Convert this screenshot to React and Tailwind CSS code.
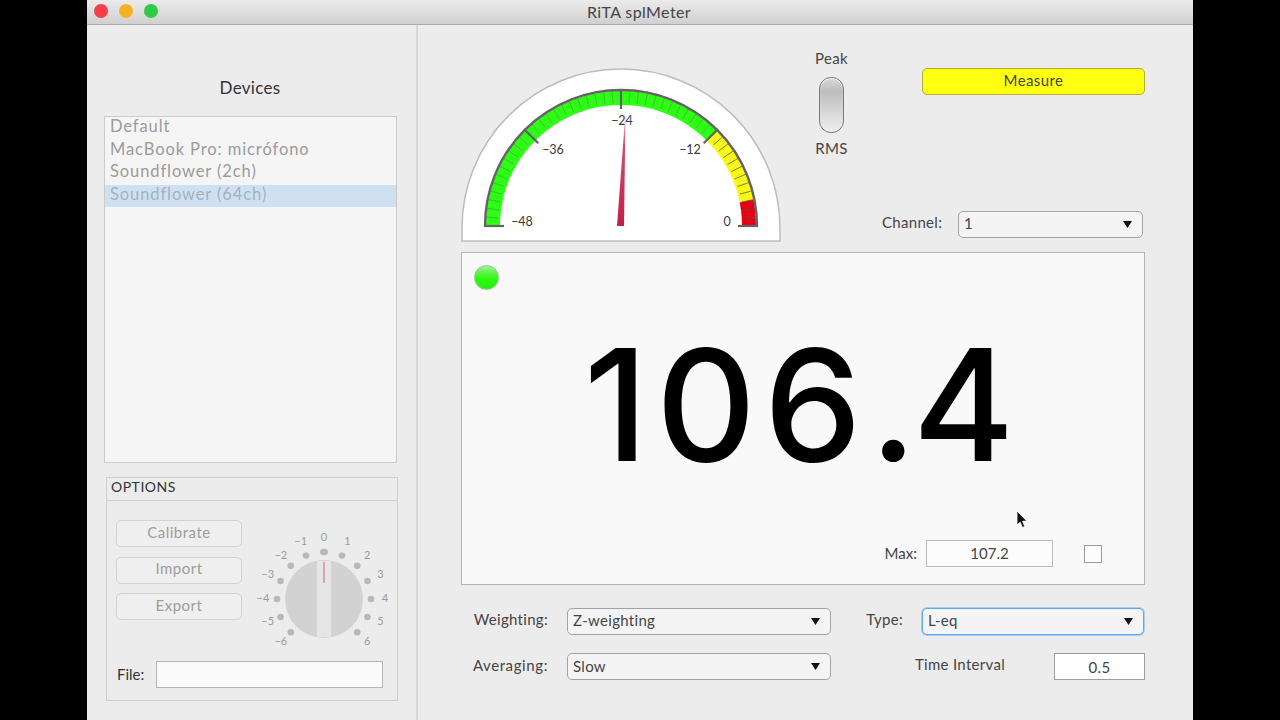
import React from "react";

const ui = "font-['Lato',sans-serif]";

function polar(cx, cy, r, deg) {
  const a = (deg * Math.PI) / 180;
  return [cx - r * Math.cos(a), cy - r * Math.sin(a)];
}

function sector(cx, cy, r1, r2, a1, a2) {
  const [x1, y1] = polar(cx, cy, r2, a1);
  const [x2, y2] = polar(cx, cy, r2, a2);
  const [x3, y3] = polar(cx, cy, r1, a2);
  const [x4, y4] = polar(cx, cy, r1, a1);
  return `M${x1} ${y1} A${r2} ${r2} 0 0 1 ${x2} ${y2} L${x3} ${y3} A${r1} ${r1} 0 0 0 ${x4} ${y4} Z`;
}

function Gauge() {
  const cx = 160;
  const cy = 158;
  const segs = Array.from({ length: 48 }, (_, i) => i);
  const labels = [
    ["-48", 61, 155],
    ["-36", 92, 83],
    ["-24", 161, 54],
    ["-12", 229, 83],
    ["0", 266, 155],
  ];
  return (
    <svg width="320" height="174" viewBox="0 0 320 174" className="block shrink-0">
      <path d="M1 173 L1 160 A159 159 0 0 1 319 160 L319 173 Z" fill="#fff" stroke="#bdbdbd" strokeWidth="1.5" />
      {segs.map((i) => {
        const a1 = i * 3.75;
        const a2 = a1 + 3.75;
        const color = i < 36 ? "#2bff12" : i < 45 ? "#f7f71a" : "#e60012";
        return <path key={i} d={sector(cx, cy, 121, 135, a1, a2)} fill={color} />;
      })}
      {segs.slice(1).map((i) => {
        const [x1, y1] = polar(cx, cy, 123, i * 3.75);
        const [x2, y2] = polar(cx, cy, 135, i * 3.75);
        return <line key={i} x1={x1} y1={y1} x2={x2} y2={y2} stroke="#3c3c3c" strokeOpacity={i < 36 ? 0.5 : 0.8} strokeWidth="0.8" />;
      })}
      <path d={`M${cx - 136} ${cy} A136 136 0 0 1 ${cx + 136} ${cy}`} fill="none" stroke="#636363" strokeWidth="2.4" />
      {[0, 45, 90, 135, 180].map((d) => {
        const [x1, y1] = polar(cx, cy, 117, d);
        const [x2, y2] = polar(cx, cy, 137, d);
        return <line key={d} x1={x1} y1={y1} x2={x2} y2={y2} stroke="#636363" strokeWidth="2.2" />;
      })}
      {labels.map(([t, x, y]) => (
        <text key={t} x={x} y={y} textAnchor="middle" dominantBaseline="middle" fontSize="12.5" fill="#3a3a3a" fontFamily="Lato, sans-serif">
          {t.replace("-", "\u2212")}
        </text>
      ))}
      <defs>
        <linearGradient id="needle" x1="0" y1="0" x2="0" y2="1">
          <stop offset="0" stopColor="#f2b8c6" />
          <stop offset="0.3" stopColor="#d24a6c" />
          <stop offset="1" stopColor="#bd2146" />
        </linearGradient>
      </defs>
      <polygon points="164.500,44 163,158 156,158" fill="url(#needle)" />
    </svg>
  );
}

function Knob() {
  const cx = 70;
  const cy = 69;
  const marks = [-6, -5, -4, -3, -2, -1, 0, 1, 2, 3, 4, 5, 6];
  return (
    <svg width="140" height="120" viewBox="0 0 140 120" className="block shrink-0 ml-[12px] mt-[10px]">
      <circle cx={cx} cy={cy} r="39" fill="#d2d2d2" />
      <path d="M63 31 L77 31 L77 107 L63 107 Z" fill="#e6e6e6" />
      <line x1="70" y1="32" x2="70" y2="53" stroke="#dd9cac" strokeWidth="1.8" />
      {marks.map((m) => {
        const rad = ((m * 22.5 - 90) * Math.PI) / 180;
        const x = cx + 47 * Math.cos(rad);
        const y = cy + 47 * Math.sin(rad);
        const lx = cx + 61 * Math.cos(rad);
        const ly = cy + 61 * Math.sin(rad);
        return (
          <g key={m}>
            <ellipse cx={x} cy={y} rx={m === 0 ? 4 : 3.300} ry="3.200" fill="#b8b8b8" />
            <text x={lx} y={ly} textAnchor="middle" dominantBaseline="middle" fontSize="11" fill="#9b9b9b" fontFamily="Lato, sans-serif">
              {String(m).replace("-", "\u2212")}
            </text>
          </g>
        );
      })}
    </svg>
  );
}

function Arrow() {
  return (
    <svg width="9" height="7" viewBox="0 0 9 7" className="block shrink-0">
      <polygon points="0,0 9,0 4.500,7" fill="#111" />
    </svg>
  );
}

function Select({ value, width, focused }) {
  return (
    <div
      className={`flex items-center justify-between h-[27px] rounded-[5px] bg-[#f4f4f4] pl-[5px] pr-[10px] text-[15px] tracking-[0.3px] text-[#444] border ${width} ${
        focused ? "border-[#5fa8ea] shadow-[0_0_0_1px_#a8d0f4]" : "border-[#a3a3a3]"
      }`}
    >
      <span className="pb-[2px]">{value}</span>
      <Arrow />
    </div>
  );
}

function OptionButton({ label }) {
  return (
    <div className="flex items-center justify-center w-[126px] h-[27px] rounded-[5px] border border-[#d3d3d3] bg-[#efefef] text-[15px] tracking-[0.5px] text-[#9d9d9d] pb-[3px]">
      {label}
    </div>
  );
}

function LeftPanel() {
  const devices = ["Default", "MacBook Pro: micrófono", "Soundflower (2ch)"];
  return (
    <div className="w-[331px] shrink-0 border-r-2 border-[#d8d8d8] pt-[51px] flex flex-col">
      <div className="text-center text-[17px] leading-[24px] tracking-[0.3px] text-[#333] pr-[3px]">Devices</div>
      <div className="ml-[17px] mt-[16px] w-[293px] h-[347px] bg-[#f5f5f5] border border-[#cbcbcb] text-[16.500px] tracking-[0.9px] text-[#9b9b9b]">
        {devices.map((d) => (
          <div key={d} className="h-[22.600px] leading-[19px] pl-[5px]">{d}</div>
        ))}
        <div className="h-[22.600px] leading-[19px] pl-[5px] bg-[#cfe1f1] text-[#a3b2bf]">Soundflower (64ch)</div>
      </div>
      <div className="ml-[19px] mt-[14px] w-[292px] h-[224px] border border-[#cfcfcf]">
        <div className="h-[23px] border-b border-[#cfcfcf] pl-[4px] text-[14px] leading-[18px] tracking-[0.5px] text-[#333]">OPTIONS</div>
        <div className="flex pl-[9px] pt-[19px]">
          <div className="flex flex-col gap-[9.500px]">
            <OptionButton label="Calibrate" />
            <OptionButton label="Import" />
            <OptionButton label="Export" />
          </div>
          <Knob />
        </div>
        <div className="flex items-center ml-[10px] mt-[11px]">
          <span className="w-[39px] text-[15px] text-[#333] pb-[1px]">File:</span>
          <div className="w-[227px] h-[27px] bg-[#fafafa] border border-[#b5b5b5]" />
        </div>
      </div>
    </div>
  );
}

function TopRow() {
  return (
    <div className="flex h-[227px]">
      <div className="pt-[43px]">
        <Gauge />
      </div>
      <div className="w-[60px] ml-[20px] pt-[23px] flex flex-col items-center text-[15px] tracking-[0.3px] text-[#444]">
        <div className="h-[20px] leading-[20px] pl-[1px]">Peak</div>
        <div className="mt-[9px] w-[25px] h-[56px] rounded-[12px] border border-[#777] bg-gradient-to-b from-[#d8d8d8] via-[#bdbdbd] via-[25%] to-[#f0f0f0] shadow-[inset_0_1px_1px_#fff]" />
        <div className="mt-[5px] h-[20px] leading-[20px] pl-[1px]">RMS</div>
      </div>
      <div className="ml-[61px] w-[223px] pt-[43px] flex flex-col">
        <div className="h-[27px] rounded-[5px] bg-[#ffff12] border border-[#b3ad3c] flex items-center justify-center text-[15px] tracking-[0.4px] text-[#444] pb-[3px]">
          Measure
        </div>
        <div className="mt-[116px] flex items-center justify-between pr-[2px] -ml-[40px]">
          <span className="text-[15px] tracking-[0.3px] text-[#444] pb-[4px]">Channel:</span>
          <Select value="1" width="w-[185px]" />
        </div>
      </div>
    </div>
  );
}

function MeterPanel() {
  return (
    <div className="relative w-[684px] h-[333px] bg-[#f9f9f9] border border-[#b4b4b4] flex flex-col">
      <div className="pt-[12px] pl-[12px]">
        <div className="w-[25px] h-[25px] rounded-full border border-[#8fc788] bg-[linear-gradient(180deg,#a4f59a_0%,#6cf25c_22%,#2cf912_55%,#27f00e_100%)]" />
      </div>
      <div className="flex-1 flex items-center justify-center pb-[22px] font-['Inter',sans-serif] font-medium text-[155px] tracking-[8px] leading-none text-black">
        <span>106<span className="tracking-[-4px]">.</span>4</span>
      </div>
      <div className="flex items-center justify-end pr-[42px] pb-[17px] text-[15px] text-[#444]">
        <span className="mr-[9px]">Max:</span>
        <div className="w-[127px] h-[27px] bg-[#fcfcfc] border border-[#bcbcbc] flex items-center justify-center">107.2</div>
        <div className="ml-[31px] w-[18px] h-[18px] bg-[#fcfcfc] border border-[#9c9c9c]" />
      </div>
      <svg width="13" height="20" viewBox="0 0 13 20" className="absolute left-[553px] top-[257px]">
        <path d="M2 1 L2 15 L5.200 12.200 L7.400 17.500 L9.800 16.500 L7.600 11.300 L11.800 11 Z" fill="#111" stroke="#fff" strokeWidth="0.8" />
      </svg>
    </div>
  );
}

function BottomRows() {
  return (
    <div className="mt-[23px] flex flex-col gap-[18px] text-[15px] tracking-[0.3px] text-[#444]">
      <div className="flex items-center">
        <span className="w-[87px] text-right pb-[4px]">Weighting:</span>
        <div className="ml-[19px]"><Select value="Z-weighting" width="w-[264px]" /></div>
        <span className="w-[72px] text-right pb-[4px]">Type:</span>
        <div className="ml-[19px]"><Select value="L-eq" width="w-[222px]" focused /></div>
      </div>
      <div className="flex items-center">
        <span className="w-[87px] text-right pb-[4px] tracking-[0.6px]">Averaging:</span>
        <div className="ml-[19px]"><Select value="Slow" width="w-[264px]" /></div>
        <span className="w-[174px] text-right pb-[5px]">Time Interval</span>
        <div className="ml-[49px] w-[91px] h-[27px] bg-white border border-[#9f9f9f] flex items-center justify-center">0.5</div>
      </div>
    </div>
  );
}

export default function App() {
  return (
    <div className={`w-[1280px] h-[720px] overflow-hidden bg-black flex justify-center ${ui}`}>
      <div className="w-[1106px] h-[720px] bg-[#ececec] flex flex-col">
        <div className="relative h-[25px] shrink-0 bg-gradient-to-b from-[#ebebeb] to-[#d0d0d0] border-b border-[#aaaaaa] flex items-center justify-center text-[16px] tracking-[0.4px] text-[#444] pr-[2px]">
          <div className="absolute left-[7px] top-[4px] flex gap-[11px]">
            <span className="w-[14px] h-[14px] rounded-full bg-[#f43f4c]" />
            <span className="w-[14px] h-[14px] rounded-full bg-[#f6b024]" />
            <span className="w-[14px] h-[14px] rounded-full bg-[#2fcb45]" />
          </div>
          RiTA splMeter
        </div>
        <div className="flex flex-1">
          <LeftPanel />
          <div className="pl-[43px] flex flex-col">
            <TopRow />
            <MeterPanel />
            <BottomRows />
          </div>
        </div>
      </div>
    </div>
  );
}
